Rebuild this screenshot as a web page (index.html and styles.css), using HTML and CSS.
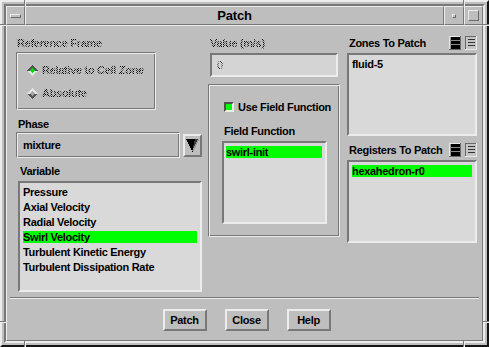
FILE: index.html
```html
<!DOCTYPE html>
<html>
<head>
<meta charset="utf-8">
<title>Patch</title>
<link rel="stylesheet" href="styles.css">
</head>
<body>
<div class="win">
  <div class="frame">
    <div class="frame-in">
      <div class="titlebar">
        <div class="tb-btn tb-menu"><span class="menu-bar"></span></div>
        <div class="tb-title">Patch</div>
        <div class="tb-btn tb-min"><span class="min-box"></span></div>
        <div class="tb-btn tb-max"><span class="max-box"></span></div>
      </div>
      <div class="body">
        <div class="cols">
          <div class="col col-left">
            <div class="lbl dis ml1">Reference Frame</div>
            <div class="group ref-group">
              <div class="radio">
                <svg width="11" height="11" viewBox="0 0 11 11" shape-rendering="crispEdges"><polygon points="5.5,0 11,5.5 0,5.5" fill="#555"/><polygon points="0,5.5 11,5.5 5.5,11" fill="#e4e4e4"/><polygon points="5.5,3 8,5.5 5.5,8 3,5.5" fill="#00e000"/></svg>
                <span class="dis">Relative to Cell Zone</span>
              </div>
              <div class="radio">
                <svg width="11" height="11" viewBox="0 0 11 11" shape-rendering="crispEdges"><polygon points="5.5,0 11,5.5 0,5.5" fill="#e4e4e4"/><polygon points="0,5.5 11,5.5 5.5,11" fill="#555"/><polygon points="5.5,3 8,5.5 5.5,8 3,5.5" fill="#a8a8a8"/></svg>
                <span class="dis">Absolute</span>
              </div>
            </div>
            <div class="lbl phase-lbl">Phase</div>
            <div class="combo-row">
              <div class="combo">mixture</div>
              <div class="drop-btn">
                <svg width="13" height="13" viewBox="0 0 13 13" shape-rendering="crispEdges"><polygon points="0,0 13,0 6.5,13" fill="#000"/><polygon points="9,0 13,0 6.5,13 6.5,10" fill="#3a3a3a"/><line x1="12.5" y1="0.5" x2="6.5" y2="12.5" stroke="#9a9a9a" stroke-width="1"/></svg>
              </div>
            </div>
            <div class="lbl var-lbl">Variable</div>
            <div class="list var-list">
              <div class="item">Pressure</div>
              <div class="item">Axial Velocity</div>
              <div class="item">Radial Velocity</div>
              <div class="item sel">Swirl Velocity</div>
              <div class="item">Turbulent Kinetic Energy</div>
              <div class="item">Turbulent Dissipation Rate</div>
            </div>
          </div>

          <div class="col col-mid">
            <div class="lbl dis ml2">Value (m/s)</div>
            <div class="input"><span class="dis">0</span></div>
            <div class="group ff-group">
              <div class="check-row">
                <span class="check"></span>
                <span>Use Field Function</span>
              </div>
              <div class="lbl ff-lbl">Field Function</div>
              <div class="list ff-list">
                <div class="item sel">swirl-init</div>
              </div>
            </div>
          </div>

          <div class="col col-right">
            <div class="hdr">
              <span class="lbl">Zones To Patch</span>
              <span class="icons">
                <svg width="12" height="14" viewBox="0 0 12 14" shape-rendering="crispEdges"><rect x="0" y="0" width="12" height="14" fill="#6a6a6a"/><rect x="0" y="0" width="11" height="13" fill="#e8e8e8"/><rect x="1" y="1" width="10" height="12" fill="#909090"/><rect x="2" y="1" width="9" height="12" fill="#000"/><rect x="2" y="4" width="9" height="1" fill="#8a8a8a"/><rect x="2" y="8" width="9" height="1" fill="#8a8a8a"/></svg>
                <svg width="12" height="14" viewBox="0 0 12 14" shape-rendering="crispEdges"><rect x="0" y="0" width="12" height="14" fill="#e8e8e8"/><rect x="0" y="0" width="11" height="13" fill="#6a6a6a"/><rect x="1" y="1" width="10" height="12" fill="#c4c4c4"/><rect x="3" y="3" width="7" height="1" fill="#333"/><rect x="3" y="6" width="7" height="1" fill="#333"/><rect x="3" y="9" width="7" height="1" fill="#333"/></svg>
              </span>
            </div>
            <div class="list zones-list">
              <div class="item">fluid-5</div>
            </div>
            <div class="hdr reg-hdr">
              <span class="lbl">Registers To Patch</span>
              <span class="icons">
                <svg width="12" height="14" viewBox="0 0 12 14" shape-rendering="crispEdges"><rect x="0" y="0" width="12" height="14" fill="#6a6a6a"/><rect x="0" y="0" width="11" height="13" fill="#e8e8e8"/><rect x="1" y="1" width="10" height="12" fill="#909090"/><rect x="2" y="1" width="9" height="12" fill="#000"/><rect x="2" y="4" width="9" height="1" fill="#8a8a8a"/><rect x="2" y="8" width="9" height="1" fill="#8a8a8a"/></svg>
                <svg width="12" height="14" viewBox="0 0 12 14" shape-rendering="crispEdges"><rect x="0" y="0" width="12" height="14" fill="#e8e8e8"/><rect x="0" y="0" width="11" height="13" fill="#6a6a6a"/><rect x="1" y="1" width="10" height="12" fill="#c4c4c4"/><rect x="3" y="3" width="7" height="1" fill="#333"/><rect x="3" y="6" width="7" height="1" fill="#333"/><rect x="3" y="9" width="7" height="1" fill="#333"/></svg>
              </span>
            </div>
            <div class="list reg-list">
              <div class="item sel">hexahedron-r0</div>
            </div>
          </div>
        </div>
        <div class="sep"></div>
        <div class="buttons">
          <div class="btn">Patch</div>
          <div class="btn">Close</div>
          <div class="btn">Help</div>
        </div>
      </div>
    </div>
  </div>
  <span class="notch v n-tl"></span>
  <span class="notch v n-bl"></span>
  <span class="notch v n-tr"></span>
  <span class="notch v n-br"></span>
  <span class="notch h n-lt"></span>
  <span class="notch h n-lb"></span>
  <span class="notch h n-rt"></span>
  <span class="notch h n-rb"></span>
</div>
</body>
</html>
```

FILE: styles.css
```css
* { box-sizing: border-box; }
html, body { margin: 0; padding: 0; background: #bebebe; }
body {
  font-family: "Liberation Sans", Arial, sans-serif;
  font-weight: bold;
  font-size: 11px;
  letter-spacing: -0.3px;
  color: #000;
}
.win { position: relative; width: 489px; height: 347px; background: #bebebe; overflow: hidden; }
.frame {
  width: 489px; height: 347px;
  border: 2px solid;
  border-color: #ececec #151515 #151515 #ececec;
  padding: 2px;
}
.frame-in {
  height: 100%;
  border: 2px solid;
  border-color: #787878 #ececec #ececec #787878;
  display: flex;
  flex-direction: column;
}
.titlebar { height: 19px; display: flex; flex: none; }
.tb-btn {
  border: 1px solid;
  border-color: #ececec #787878 #787878 #ececec;
  display: flex; align-items: center; justify-content: center;
}
.tb-menu { width: 19px; }
.tb-min { width: 20px; }
.tb-max { width: 19px; }
.tb-title {
  flex: 1;
  border: 1px solid;
  border-color: #ececec #787878 #787878 #ececec;
  text-align: center;
  font-size: 13px;
  line-height: 17px;
  letter-spacing: -0.2px;
}
.menu-bar {
  width: 11px; height: 4px;
  border: 1px solid;
  border-color: #ececec #6a6a6a #6a6a6a #ececec;
  margin-top: 1px;
}
.min-box {
  width: 4px; height: 4px;
  border: 1px solid;
  border-color: #ececec #6a6a6a #6a6a6a #ececec;
  margin-top: 1px;
}
.max-box {
  width: 11px; height: 11px;
  border: 1px solid;
  border-color: #ececec #6a6a6a #6a6a6a #ececec;
}
.body {
  flex: 1;
  border: 1px solid;
  border-color: #ececec #787878 #787878 #ececec;
  padding: 10px 5px 0 9px;
  display: flex;
  flex-direction: column;
}
.cols { display: flex; height: 256px; flex: none; }
.col { display: flex; flex-direction: column; }
.col-left { width: 186px; }
.col-mid { width: 132px; margin-left: 6px; }
.col-right { width: 130px; margin-left: 7px; }

.lbl { height: 14px; line-height: 14px; white-space: nowrap; }
.ml1 { margin-left: 1px; }
.ml2 { margin-left: 2px; }

.dis {
  background: repeating-conic-gradient(#000 0 25%, transparent 0 50%) 0 0 / 2px 2px;
  -webkit-background-clip: text;
  background-clip: text;
  color: transparent;
}

.group {
  border: 1px solid;
  border-color: #787878 #ececec #ececec #787878;
  box-shadow: inset 1px 1px 0 #ececec, inset -1px -1px 0 #787878;
}
.ref-group {
  width: 140px; height: 58px;
  margin-top: 2px;
  padding: 10px 0 0 10px;
  display: flex; flex-direction: column; gap: 9px;
}
.radio { display: flex; align-items: center; gap: 4px; height: 14px; line-height: 14px; white-space: nowrap; }
.radio svg { flex: none; }

.phase-lbl { margin-top: 7px; margin-left: 2px; }
.combo-row { display: flex; align-items: center; margin-top: 1px; }
.combo {
  width: 164px; height: 26px;
  border: 1px solid;
  border-color: #787878 #ececec #ececec #787878;
  box-shadow: inset 1px 1px 0 #ececec, inset -1px -1px 0 #787878;
  padding-left: 6px;
  line-height: 24px;
}
.drop-btn {
  width: 19px; height: 23px;
  margin-left: 3px;
  border: 2px solid;
  border-color: #ececec #787878 #787878 #ececec;
  display: flex; align-items: center; justify-content: center;
}
.var-lbl { margin-top: 6px; margin-left: 4px; }

.list {
  border: 2px solid;
  border-color: #787878 #ececec #ececec #787878;
  background: #d9d9d9;
  padding: 3px;
}
.item { height: 12px; line-height: 12px; margin-bottom: 3px; white-space: nowrap; }
.sel { background: #00ff00; }
.var-list { width: 184px; height: 111px; margin-top: 3px; margin-left: 2px; }

.input {
  width: 128px; height: 24px;
  margin-top: 3px; margin-left: 2px;
  border: 2px solid;
  border-color: #787878 #ececec #ececec #787878;
  background: #d4d4d4;
  padding-left: 5px;
  line-height: 20px;
  font-weight: normal;
}
.ff-group {
  width: 132px; height: 153px;
  margin-top: 7px;
  padding: 15px 0 0 13px;
  display: flex; flex-direction: column;
}
.check-row { display: flex; align-items: center; gap: 4px; height: 14px; margin-left: 2px; white-space: nowrap; }
.check {
  width: 10px; height: 10px; flex: none;
  border: 2px solid;
  border-color: #505050 #ececec #ececec #505050;
  background: #00ff00;
}
.ff-lbl { margin-top: 10px; margin-left: 2px; }
.ff-list { width: 105px; height: 83px; margin-top: 3px; padding: 3px 3px 3px 2px; }

.hdr { display: flex; align-items: center; justify-content: space-between; height: 14px; }
.hdr .lbl { margin-left: 2px; }
.icons { display: flex; gap: 4px; }
.icons svg { display: block; }
.zones-list { width: 130px; height: 83px; margin-top: 3px; padding: 3px 3px 3px 3px; }
.reg-hdr { margin-top: 7px; }
.reg-list { width: 130px; height: 83px; margin-top: 3px; }

.sep {
  height: 2px;
  margin: 5px -2px 0 -6px;
  border-top: 1px solid #787878;
  border-bottom: 1px solid #ececec;
}
.buttons { display: flex; justify-content: center; gap: 18px; margin-top: 10px; }
.btn {
  width: 44px; height: 22px;
  border: 2px solid;
  border-color: #ececec #787878 #787878 #ececec;
  text-align: center;
  line-height: 18px;
}

.notch { position: absolute; display: block; }
.notch.v { width: 2px; height: 6px; border-left: 1px solid #787878; border-right: 1px solid #ececec; }
.notch.h { width: 6px; height: 2px; border-top: 1px solid #787878; border-bottom: 1px solid #ececec; }
.n-tl { left: 24px; top: 0; }
.n-bl { left: 24px; top: 341px; }
.n-tr { left: 463px; top: 0; }
.n-br { left: 463px; top: 341px; }
.n-lt { left: 0; top: 24px; }
.n-lb { left: 0; top: 321px; }
.n-rt { left: 483px; top: 24px; }
.n-rb { left: 483px; top: 321px; }
```
